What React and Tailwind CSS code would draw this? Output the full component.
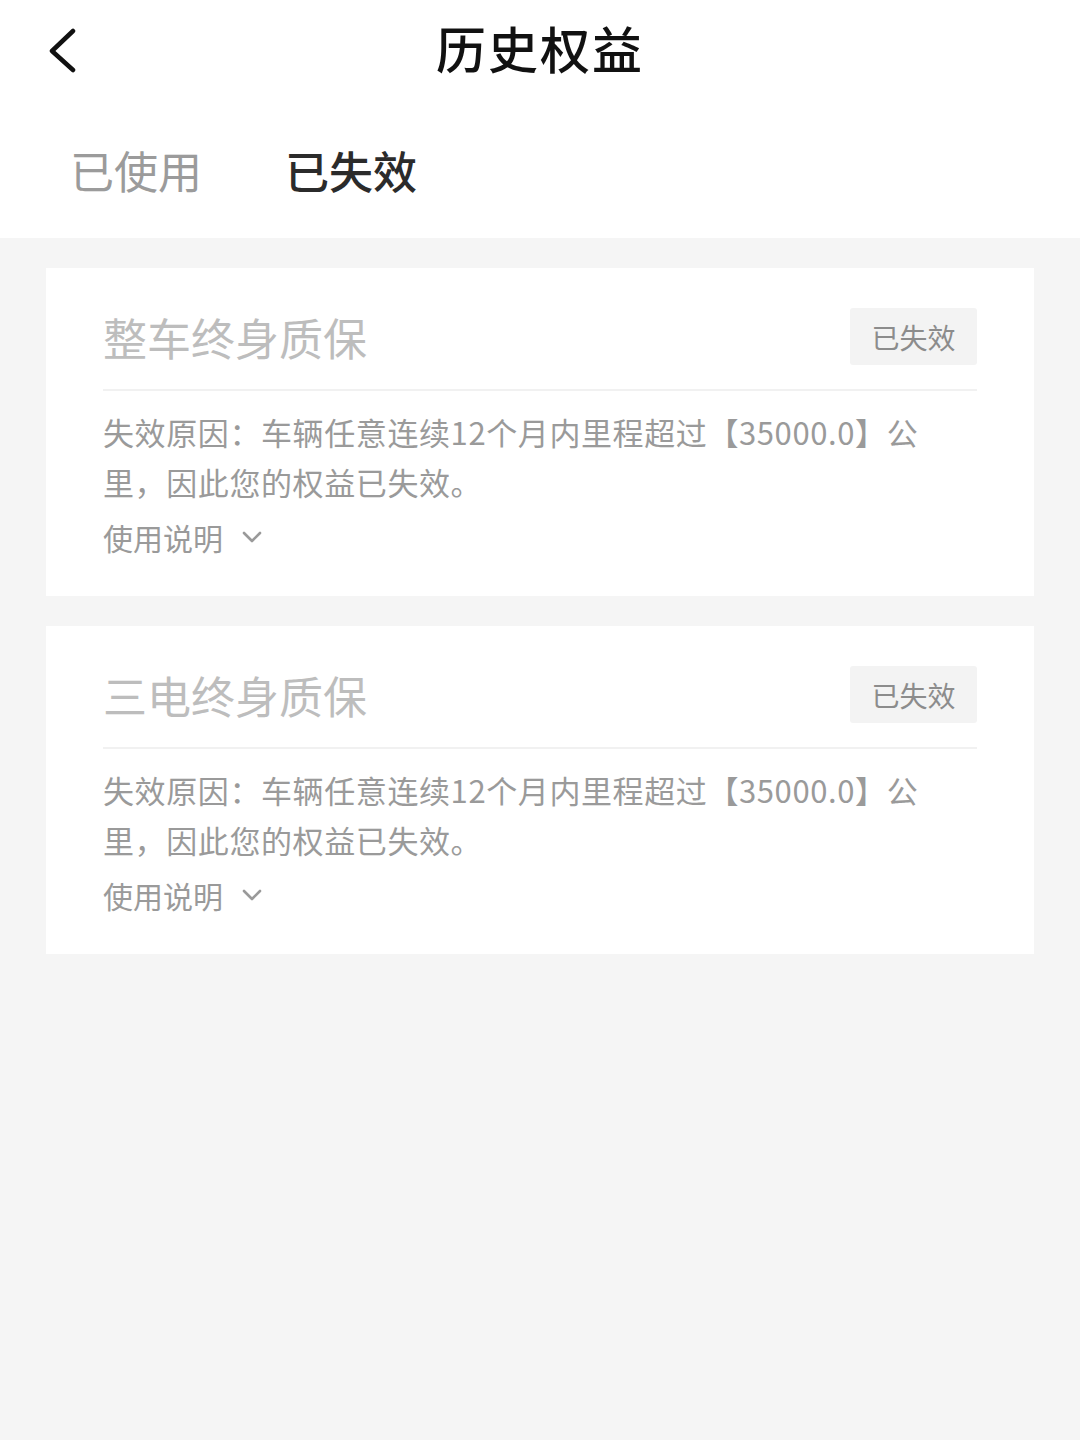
import { useState } from 'react'

const FONT = { fontFamily: '"Noto Sans CJK SC", "Noto Sans", sans-serif' }

const TABS = ['已使用', '已失效']

const ITEMS = [
  {
    id: 'vehicle',
    title: '整车终身质保',
    status: '已失效',
    reason: '失效原因：车辆任意连续12个月内里程超过【35000.0】公里，因此您的权益已失效。',
  },
  {
    id: 'battery',
    title: '三电终身质保',
    status: '已失效',
    reason: '失效原因：车辆任意连续12个月内里程超过【35000.0】公里，因此您的权益已失效。',
  },
]

export default function App() {
  const [tab, setTab] = useState(1)

  return (
    <div className="min-h-[1440px] bg-[#f5f5f5]" style={FONT}>
      {/* Top bar + tabs */}
      <div className="bg-white">
        <div className="relative flex h-[92px] items-center justify-center pt-[2px]">
          <button className="absolute left-[40px] top-[23px] p-1">
            <svg width="34" height="46" viewBox="0 0 34 46" fill="none">
              <path d="M29 4 L8 24 L29 43" stroke="#111" strokeWidth="4.5" strokeLinecap="round" strokeLinejoin="round" />
            </svg>
          </button>
          <h1 className="text-[50px] font-medium leading-none text-[#111] tracking-[2px]">历史权益</h1>
        </div>
        <div className="flex h-[146px] items-start gap-[83px] pl-[70px] pt-[56px]">
          {TABS.map((t, i) => (
            <button
              key={t}
              onClick={() => setTab(i)}
              className={`text-[44px] leading-none ${tab === i ? 'text-[#2b2b2b] font-medium' : 'text-[#9b9b9b]'}`}
            >
              {t}
            </button>
          ))}
        </div>
      </div>

      {/* Expired benefit cards */}
      <div className="flex flex-col gap-[30px] px-[46px] pt-[30px]">
        {ITEMS.map(item => (
          <Card key={item.id} item={item} />
        ))}
      </div>
    </div>
  )
}

function Card({ item }) {
  const [open, setOpen] = useState(false)

  return (
    <div className="bg-white px-[57px] pt-[40px] pb-[34px]">
      <div className="flex items-center justify-between pb-[24px] border-b-2 border-[#f1f1f1]">
        <span className="text-[44px] leading-none text-[#bdbdbd]">{item.title}</span>
        <span className="flex h-[57px] w-[127px] items-center justify-center rounded-[3px] bg-[#f3f3f3] text-[28px] text-[#8c8c8c]">
          {item.status}
        </span>
      </div>
      <p className="mt-[16px] pr-[30px] text-[31px] leading-[50px] tracking-[0.6px] text-[#9a9a9a]">{item.reason}</p>
      <button
        onClick={() => setOpen(!open)}
        className="mt-[5px] flex items-center gap-[18px] text-[30px] leading-[50px] text-[#9a9a9a]"
      >
        使用说明
        <svg width="22" height="14" viewBox="0 0 22 14" fill="none" className={open ? 'rotate-180' : ''}>
          <path d="M3 3 L11 11 L19 3" stroke="#9a9a9a" strokeWidth="2.6" strokeLinecap="round" strokeLinejoin="round" />
        </svg>
      </button>
    </div>
  )
}
